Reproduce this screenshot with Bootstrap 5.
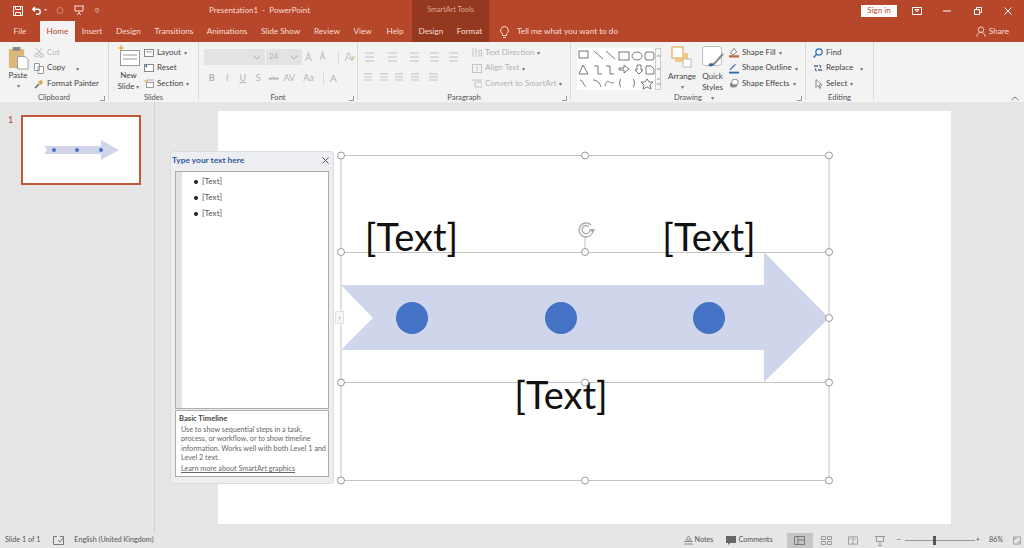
<!DOCTYPE html>
<html lang="en">
<head>
  <meta charset="UTF-8">
  <title>Presentation1 - PowerPoint</title>
  <link href="https://cdn.jsdelivr.net/npm/bootstrap@5.3.0/dist/css/bootstrap.min.css" rel="stylesheet" />
  <style>
    html, body { height: 548px; overflow: hidden; }
    body { font-family: Lato, "Open Sans", sans-serif; font-size: 8px; color: #444; background: #e6e6e6; line-height: 1.2; }
    svg { display: block; flex: none; }

    /* title bar */
    .title-bar { height: 21px; background: #b7472a; color: #f6ddd5; }
    .qat { width: 110px; padding-left: 13px; gap: 9px; }
    .title-text { width: 302px; font-size: 8px; padding-left: 99px; white-space: nowrap; }
    .tools-head { width: 77px; height: 21px; background: #94391f; font-size: 7.2px; color: #dca795; }
    .signin { background: #fff; color: #b7472a; width: 36px; height: 12px; font-size: 8px; margin-right: 15px; }
    .win-gap-a { margin-right: 21px; }
    .win-gap-b { margin-right: 23px; }
    .win-gap-c { margin-right: 22px; }
    .win-gap-d { margin-right: 12px; }

    /* tabs */
    .tab-bar { height: 21px; background: #b7472a; color: #f6ddd5; font-size: 8.2px; }
    .rb-tab { height: 21px; white-space: nowrap; }
    .rb-tab.on { background: #f3f3f3; color: #b7472a; }
    .rb-tab.ctx { background: #94391f; }
    .tw-31 { width: 31px; } .tw-34 { width: 34px; } .tw-35 { width: 35px; } .tw-38 { width: 38px; }
    .tw-39 { width: 39px; } .tw-40 { width: 40px; } .tw-52 { width: 52px; } .tw-53 { width: 53px; } .tw-54 { width: 54px; }
    .tell { margin-left: 11px; }
    .share-btn { margin-right: 15px; gap: 3px; }

    /* ribbon */
    .ribbon { height: 60px; background: #f3f3f3; }
    .rb-group { height: 58px; border-right: 1px solid #d8d8d8; position: relative; padding-top: 2px; }
    .grp-label { position: absolute; left: 0; right: 0; bottom: -2px; text-align: center; font-size: 7.6px; color: #555; }
    .launcher { position: absolute; right: 3px; bottom: -1px; width: 5px; height: 5px; border-left: 1px solid #999; border-bottom: 1px solid #999; transform: scaleX(-1); }
    .rb-col { display: flex; flex-direction: column; padding-top: 1px; }
    .rb-row { height: 15.5px; display: flex; align-items: center; gap: 3px; white-space: nowrap; }
    .big-btn { text-align: center; line-height: 10.5px; }
    .off { color: #b4b4b4; }
    .caret-mark { font-size: 6px; color: #777; }
    .combo { height: 16px; background: #e3e3e3; }
    .collapse-arrow { position: absolute; right: 5px; bottom: 1px; }

    .grp-clip { width: 109px; }
    .grp-slides { width: 90px; }
    .grp-font { width: 159px; padding: 7px 0 0 5px; }
    .grp-para { width: 213px; padding-left: 6px; }
    .grp-draw { width: 235px; padding-left: 6px; }
    .grp-edit { width: 68px; padding-left: 7px; padding-top: 3px; }

    .btn-paste { width: 34px; padding: 2px 0 0 2px; }
    .btn-new { width: 35px; padding-left: 4px; }
    .big-gap-1 { margin-top: 3px; }
    .big-gap-2 { margin-top: 3px; }
    .btn-arrange { width: 36px; margin-left: 3px; padding-top: 2px; }
    .btn-quick { width: 25px; padding-top: 2px; }
    .rb-col.col-para { width: 108px; padding-top: 6px; }

    .combo-font { width: 61px; margin-right: 1px; }
    .combo-size { width: 36px; padding-left: 3px; }
    .grow-a { width: 11px; margin-left: 1px; font-size: 10px; text-align: center; }
    .grow-b { width: 11px; margin-left: 3px; font-size: 9px; text-align: center; }
    .fmt-sep { width: 1px; height: 13px; background: #dcdcdc; }
    .sep-a { margin: 0 5px 0 10px; }
    .sep-b { margin: 0 6px 0 3px; }
    .font-row2 { height: 16px; margin-top: 5px; font-size: 9px; }
    .fcell { width: 15.5px; text-align: center; }
    .fcell-aa { width: 23px; text-align: center; }
    .fcell-abc { font-size: 6.5px; }
    .fcell-a { font-size: 10px; }

    /* work area */
    .work-area { height: 431px; position: relative; }
    .thumb-pane { width: 155px; height: 431px; border-right: 1px solid #d2d2d2; padding: 13px 0 0 8px; }
    .thumb-num { width: 13px; color: #b7472a; font-size: 9px; }
    .thumb-box { width: 120px; height: 70px; background: #fff; border: 2px solid #c0583b; }
    .canvas-svg { position: absolute; left: 0; top: 0; }
    .slide-text { font-family: Lato, sans-serif; font-size: 38px; fill: #111; text-anchor: middle; }

    /* smartart pane */
    .text-pane { position: absolute; left: 170px; top: 49px; width: 164px; height: 333px; background: #eceef1; border: 1px solid #dcdcdc; border-radius: 3px; padding: 0 4px 6px 4px; }
    .pane-head { height: 19px; padding-bottom: 2px; color: #2b579a; font-weight: 700; font-size: 8.4px; margin-left: -3px; }
    .pane-list { height: 238px; background: #fff; border: 1px solid #ababab; padding: 0; }
    .pane-rail { width: 6px; background: #e3e3e3; height: 100%; }
    .pane-list-body { padding-top: 2px; }
    .pane-item { height: 16px; font-size: 8.2px; gap: 4px; padding-left: 12px; color: #555; }
    .dot-mark { width: 4px; height: 4px; border-radius: 50%; background: #222; }
    .pane-info { height: 67px; background: #fff; border: 1px solid #ababab; margin-top: 1px; padding: 3px 3px 2px; font-size: 7.2px; line-height: 9.2px; color: #666; }
    .pane-info b { display: block; color: #444; font-weight: 700; margin-bottom: 2px; font-size: 7.6px; }
    .pane-info p { margin: 0 -3px 2px 2px; }
    .pane-info a { color: #666; margin-left: 2px; }
    .pane-tab { position: absolute; left: 335px; top: 209px; width: 9px; height: 13px; background: #f5f5f5; border: 1px solid #e2e2e2; font-size: 7px; color: #777; }

    /* status bar */
    .status-bar { height: 15px; background: #e6e6e6; font-size: 7.2px; color: #555; position: absolute; left: 0; right: 0; top: 533px; }
    .st-left { margin-left: 5px; }
    .st-check { margin-left: 13px; }
    .st-lang { margin-left: 10px; }
    .st-icon { margin-right: 2px; }
    .st-notes { margin-right: 13px; }
    .st-comments { margin-right: 14px; }
    .view-on { background: #c6c6c6; width: 26px; height: 15px; }
    .v-sorter { margin: 0 8px; }
    .v-reader { margin: 0 17px 0 8px; }
    .v-show { margin-right: 12px; }
    .zoom-track { width: 70px; height: 1px; background: #999; position: relative; margin: 0 1px 0 4px; }
    .zoom-thumb { position: absolute; left: 28px; top: -4px; width: 3px; height: 9px; background: #555; }
    .st-zoom { margin-left: 9px; }
    .st-fit { margin: 0 3px 0 10px; }
  </style>
</head>
<body>

<!-- Title bar -->
<div class="title-bar d-flex align-items-center">
  <div class="qat d-flex align-items-center">
    <svg width="10" height="10" viewBox="0 0 10 10"><path d="M.5.5h9v9h-9zM2.500.5v3h5v-3M2.500 9.500v-3h5v3" fill="none" stroke="#fff"/></svg>
    <svg width="15" height="10" viewBox="0 0 15 10"><path d="M3 1L.8 3.300 3 5.600M1 3.300h5c3 0 3 5 0 5H4" fill="none" stroke="#fff" stroke-width="1.400"/><path d="M12 3h3l-1.500 2z" fill="#f6ddd5"/></svg>
    <svg width="8" height="9" viewBox="0 0 8 9"><circle cx="4" cy="4.500" r="3" fill="none" stroke="#d38a72"/></svg>
    <svg width="12" height="11" viewBox="0 0 12 11"><path d="M1 1h10M2 1v5h8V1M6 6v2M4 10l2-2 2 2" fill="none" stroke="#f6ddd5"/></svg>
    <svg width="6" height="5" viewBox="0 0 6 5"><path d="M1 1h4M1 2.500l2 2 2-2" fill="none" stroke="#f6ddd5" stroke-width=".8"/></svg>
  </div>
  <div class="title-text">Presentation1 &nbsp;-&nbsp; PowerPoint</div>
  <div class="tools-head d-flex align-items-center justify-content-center">SmartArt Tools</div>
  <div class="ms-auto d-flex align-items-center">
    <div class="signin d-flex align-items-center justify-content-center">Sign in</div>
    <svg class="win-gap-a" width="10" height="8" viewBox="0 0 10 8"><path d="M.5.5h9v7h-9zM3 2.500h4L5 5z" fill="none" stroke="#fff"/></svg>
    <svg class="win-gap-b" width="8" height="8" viewBox="0 0 8 8"><path d="M0 4h8" stroke="#fff"/></svg>
    <svg class="win-gap-c" width="8" height="8" viewBox="0 0 8 8"><path d="M.5 2.500h5v5h-5zM2.500 2.500v-2h5v5h-2" fill="none" stroke="#fff"/></svg>
    <svg class="win-gap-d" width="8" height="8" viewBox="0 0 8 8"><path d="M.5.5l7 7M7.500.5l-7 7" stroke="#fff"/></svg>
  </div>
</div>

<!-- Tabs -->
<div class="tab-bar d-flex align-items-center">
  <div class="rb-tab tw-40 d-flex align-items-center justify-content-center">File</div>
  <div class="rb-tab on tw-35 d-flex align-items-center justify-content-center">Home</div>
  <div class="rb-tab tw-34 d-flex align-items-center justify-content-center">Insert</div>
  <div class="rb-tab tw-39 d-flex align-items-center justify-content-center">Design</div>
  <div class="rb-tab tw-52 d-flex align-items-center justify-content-center">Transitions</div>
  <div class="rb-tab tw-54 d-flex align-items-center justify-content-center">Animations</div>
  <div class="rb-tab tw-53 d-flex align-items-center justify-content-center">Slide Show</div>
  <div class="rb-tab tw-40 d-flex align-items-center justify-content-center">Review</div>
  <div class="rb-tab tw-31 d-flex align-items-center justify-content-center">View</div>
  <div class="rb-tab tw-34 d-flex align-items-center justify-content-center">Help</div>
  <div class="rb-tab ctx tw-38 d-flex align-items-center justify-content-center">Design</div>
  <div class="rb-tab ctx tw-39 d-flex align-items-center justify-content-center">Format</div>
  <div class="tell d-flex align-items-center gap-2">
    <svg width="9" height="12" viewBox="0 0 9 12"><path d="M4.500.5a4 4 0 0 0-2 7.400V9.500h4V7.900a4 4 0 0 0-2-7.400zM3 11.500h3" fill="none" stroke="#f6ddd5"/></svg>
    Tell me what you want to do
  </div>
  <div class="share-btn ms-auto d-flex align-items-center">
    <svg width="10" height="11" viewBox="0 0 11 11"><circle cx="5.500" cy="3.500" r="3" fill="none" stroke="#f6ddd5"/><path d="M1 11c0-6 9-6 9 0" fill="none" stroke="#f6ddd5"/></svg>
    Share
  </div>
</div>

<!-- Ribbon -->
<div class="ribbon d-flex">
  <!-- Clipboard -->
  <div class="rb-group grp-clip d-flex">
    <div class="big-btn btn-paste">
      <svg class="mx-auto" width="22" height="24" viewBox="0 0 23 25"><rect x="2" y="3" width="16" height="20" rx="1" fill="#dcb97a"/><rect x="6" y="1" width="8" height="4" fill="#8a8a8a"/><path d="M11 11h8l3 3v10H11z" fill="#fff" stroke="#999"/></svg>
      <div>Paste</div>
      <div class="caret-mark">&#9662;</div>
    </div>
    <div class="rb-col">
      <div class="rb-row off"><svg width="10" height="11" viewBox="0 0 10 11"><path d="M2 1l5 6M8 1L3 7" stroke="#bbb" fill="none"/><circle cx="2.500" cy="8.500" r="1.800" fill="none" stroke="#bbb"/><circle cx="7.500" cy="8.500" r="1.800" fill="none" stroke="#bbb"/></svg>Cut</div>
      <div class="rb-row"><svg width="10" height="11" viewBox="0 0 10 11"><path d="M.5.500h5v7h-5zM4 3.500h5.500v7H4z" fill="#fff" stroke="#999"/></svg>Copy <span class="caret-mark ms-2">&#9662;</span></div>
      <div class="rb-row"><svg width="10" height="10" viewBox="0 0 10 10"><path d="M1 9l4-4" stroke="#666" stroke-width="1.600"/><path d="M4 3l3-2 2 2-2 3z" fill="#d9a441"/></svg>Format Painter</div>
    </div>
    <div class="grp-label">Clipboard</div><div class="launcher"></div>
  </div>
  <!-- Slides -->
  <div class="rb-group grp-slides d-flex">
    <div class="big-btn btn-new">
      <svg class="mx-auto" width="22" height="23" viewBox="0 0 22 23"><rect x="2.500" y="6.500" width="19" height="15" fill="#fff" stroke="#999"/><path d="M5 11h14M5 15h14" stroke="#ccc" stroke-width="2"/><path d="M3 0l1 3 3 1-3 1-1 3-1-3-3-1 3-1z" fill="#e8b54a"/></svg>
      <div class="big-gap-2">New</div>
      <div>Slide <span class="caret-mark">&#9662;</span></div>
    </div>
    <div class="rb-col">
      <div class="rb-row"><svg width="10" height="10" viewBox="0 0 10 10"><rect x=".5" y="1.500" width="9" height="7" fill="#fff" stroke="#888"/><rect x="2" y="3" width="6" height="1.500" fill="#bbb"/></svg>Layout <span class="caret-mark">&#9662;</span></div>
      <div class="rb-row"><svg width="10" height="10" viewBox="0 0 10 10"><rect x=".5" y="1.500" width="9" height="7" fill="#fff" stroke="#888"/><path d="M1 3l2-2v4z" fill="#2b6cb0"/></svg>Reset</div>
      <div class="rb-row"><svg width="10" height="10" viewBox="0 0 10 10"><path d="M0 2h4" stroke="#d9a441"/><rect x="2.500" y="3.500" width="7" height="5" fill="#fff" stroke="#999"/><path d="M3 1h7" stroke="#aaa"/></svg>Section <span class="caret-mark">&#9662;</span></div>
    </div>
    <div class="grp-label">Slides</div>
  </div>
  <!-- Font -->
  <div class="rb-group grp-font">
    <div class="d-flex align-items-center off">
      <div class="combo combo-font d-flex align-items-center justify-content-end"><svg class="me-1" width="8" height="5" viewBox="0 0 8 5"><path d="M.5.500l3.500 3.500 3.500-3.500" fill="none" stroke="#aaa"/></svg></div>
      <div class="combo combo-size d-flex align-items-center">24<svg class="ms-auto me-1" width="8" height="5" viewBox="0 0 8 5"><path d="M.5.500l3.500 3.500 3.500-3.500" fill="none" stroke="#aaa"/></svg></div>
      <div class="grow-a">A&#770;</div>
      <div class="grow-b">A&#770;</div>
      <div class="fmt-sep sep-a"></div>
      <svg width="11" height="10" viewBox="0 0 11 10"><path d="M1 9l3-8h1l3 8M3 6h4" fill="none" stroke="#c2c2c2"/><path d="M6 8l3-4 2 1-3 4z" fill="#d9c9a4"/></svg>
    </div>
    <div class="font-row2 d-flex align-items-center off">
      <b class="fcell">B</b><i class="fcell">I</i><u class="fcell">U</u><span class="fcell">S</span><span class="fcell fcell-abc"><s>abc</s></span><span class="fcell">AV</span><span class="fcell-aa">Aa</span>
      <div class="fmt-sep sep-b"></div>
      <span class="fcell-a">A</span>
    </div>
    <div class="grp-label">Font</div><div class="launcher"></div>
  </div>
  <!-- Paragraph -->
  <div class="rb-group grp-para d-flex">
    <div class="rb-col col-para">
      <svg width="102" height="14" viewBox="0 0 102 14"><g stroke="#c2c2c2" fill="none"><path d="M1 3h9M1 7h9M1 11h9M24 3h9M24 7h9M24 11h9M46 3h9M46 7h9M46 11h9M66 3h9M66 7h9M66 11h9M85 3h9M85 7h9M85 11h9"/></g></svg>
      <svg class="mt-2" width="88" height="10" viewBox="0 0 88 10"><g stroke="#c2c2c2" fill="none"><path d="M0 2h8M0 5h8M0 8h8M16 2h8M16 5h8M16 8h8M31 2h8M31 5h8M31 8h8M47 2h8M47 5h8M47 8h8M65 2h9M65 5h9M65 8h9"/></g></svg>
    </div>
    <div class="rb-col off">
      <div class="rb-row"><svg width="10" height="11" viewBox="0 0 10 11"><path d="M1 1v9M4 1v9M7 3h2.500v6H7z" fill="none" stroke="#c2c2c2"/></svg>Text Direction <span class="caret-mark">&#9662;</span></div>
      <div class="rb-row"><svg width="10" height="11" viewBox="0 0 10 11"><rect x=".5" y="1.500" width="9" height="8" fill="none" stroke="#c2c2c2"/><path d="M5 3v5" stroke="#c2c2c2"/></svg>Align Text <span class="caret-mark">&#9662;</span></div>
      <div class="rb-row"><svg width="10" height="11" viewBox="0 0 10 11"><path d="M0 2h10M3 4h7v5H3z" fill="none" stroke="#c2c2c2"/></svg>Convert to SmartArt <span class="caret-mark">&#9662;</span></div>
    </div>
    <div class="grp-label">Paragraph</div><div class="launcher"></div>
  </div>
  <!-- Drawing -->
  <div class="rb-group grp-draw d-flex">
    <svg class="mt-1" width="84" height="42" viewBox="0 0 84 42">
      <rect width="78" height="42" fill="#fff"/>
      <rect x="78.500" y=".5" width="5" height="41" fill="#f7f7f7" stroke="#ccc"/>
      <g fill="none" stroke="#555" stroke-width=".8">
        <rect x="2" y="3" width="9" height="7"/><path d="M17 3l9 8M29 3l9 8"/><rect x="42" y="4" width="10" height="8"/><ellipse cx="60" cy="8" rx="5" ry="4"/><rect x="68" y="4" width="9" height="8" rx="2"/>
        <path d="M6 17l5 9H2zM17 18h4v8h4M29 18h4v8h4M42 20h5v-3l5 4-5 4v-3h-5zM60 17v5h-2l4 4 4-4h-2v-5zM69 18h5l3 3v5h-8z"/>
        <path d="M3 32c3 0 4 6 6 7M16 32c4 0 7 3 8 7M28 38c3-10 5 0 9-4M44 31c-2 0 0 4-2 4 2 0 0 4 2 4M56 31c2 0 0 4 2 4-2 0 0 4-2 4M70 31l2 3 4 0-3 3 1 4-4-2-4 2 1-4-3-3 4 0z"/>
      </g>
      <path d="M80 9l1.500-2 1.500 2M80 20l1.500 2 1.500-2M80 31h3M80 35l1.500 2 1.500-2" fill="none" stroke="#666" stroke-width=".6"/>
    </svg>
    <div class="big-btn btn-arrange">
      <svg class="mx-auto" width="22" height="22" viewBox="0 0 22 22"><rect x="1" y="1" width="11" height="11" fill="#fff" stroke="#d9a441"/><path d="M4 11h8V7h5v9H4z" fill="#edc987"/><rect x="12" y="13" width="8" height="8" fill="#fff" stroke="#bbb"/></svg>
      <div class="big-gap-1">Arrange</div>
      <div class="caret-mark">&#9662;</div>
    </div>
    <div class="big-btn btn-quick">
      <svg class="mx-auto" width="22" height="22" viewBox="0 0 22 22"><rect x=".5" y=".5" width="19" height="19" rx="3" fill="#fff" stroke="#bbb"/><path d="M21 8l-9 10-4 2" fill="none" stroke="#888" stroke-width="2"/><path d="M8 17l4 1-2 2-4 0z" fill="#2b6cb0"/></svg>
      <div class="big-gap-1">Quick</div>
      <div>Styles <span class="caret-mark">&#9662;</span></div>
    </div>
    <div class="rb-col ms-1">
      <div class="rb-row"><svg width="10" height="11" viewBox="0 0 11 11"><path d="M5.500 1L1.500 6l3 2 4-3z" fill="#fff" stroke="#777"/><rect y="8.500" width="11" height="2.500" fill="#c9663f"/></svg>Shape Fill <span class="caret-mark">&#9662;</span></div>
      <div class="rb-row"><svg width="10" height="11" viewBox="0 0 11 11"><path d="M1 7l6-6" stroke="#2b6cb0" stroke-width="1.400"/><rect y="9" width="11" height="2" fill="#2b6cb0"/></svg>Shape Outline <span class="caret-mark">&#9662;</span></div>
      <div class="rb-row"><svg width="10" height="11" viewBox="0 0 11 11"><rect x="1" y="4" width="8" height="6" rx="3" fill="#888"/><rect x="3" y="1" width="7" height="6" rx="2.500" fill="#fff" stroke="#888"/></svg>Shape Effects <span class="caret-mark">&#9662;</span></div>
    </div>
    <div class="grp-label">Drawing</div><div class="launcher"></div>
  </div>
  <!-- Editing -->
  <div class="rb-group grp-edit">
    <div class="rb-row"><svg width="10" height="10" viewBox="0 0 10 10"><circle cx="6" cy="4" r="3.200" fill="none" stroke="#2b6cb0" stroke-width="1.200"/><path d="M3.500 6.500L.5 9.500" stroke="#2b6cb0" stroke-width="1.400"/></svg>Find</div>
    <div class="rb-row"><svg width="10" height="10" viewBox="0 0 10 10"><path d="M1 3h4M5 7h4" stroke="#666" stroke-width="1.500"/><path d="M6 2l2 1-1 2M4 8L2 7l1-2" fill="none" stroke="#2b6cb0"/></svg>Replace <span class="caret-mark ms-1">&#9662;</span></div>
    <div class="rb-row"><svg width="10" height="10" viewBox="0 0 10 10"><path d="M3 .5v8l2-2 2 3 1-.5-2-3h3z" fill="#fff" stroke="#888"/></svg>Select <span class="caret-mark">&#9662;</span></div>
    <div class="grp-label">Editing</div>
  </div>
  <div class="flex-grow-1 position-relative">
    <svg class="collapse-arrow" width="8" height="5" viewBox="0 0 8 5"><path d="M.5 4L4 1l3.500 3" fill="none" stroke="#777"/></svg>
  </div>
</div>

<!-- Work area -->
<div class="work-area d-flex">
  <div class="thumb-pane d-flex">
    <div class="thumb-num">1</div>
    <div class="thumb-box d-flex align-items-center justify-content-center">
      <svg width="76" height="20" viewBox="-1 0 76 20"><path d="M0 6h57V0l18 10-18 10v-6H0l3-4z" fill="#d0d5e9"/><circle cx="10" cy="10" r="2" fill="#4472c4"/><circle cx="33" cy="10" r="2" fill="#4472c4"/><circle cx="57" cy="10" r="2" fill="#4472c4"/></svg>
    </div>
  </div>

  <!-- Slide canvas -->
  <svg class="canvas-svg" width="1024" height="431" viewBox="0 102 1024 431">
    <rect x="218" y="111" width="733" height="413" fill="#fff"/>
    <path d="M341 285h423v-33l65 66-65 64v-32H341l32-32z" fill="#cfd5ea"/>
    <circle cx="412" cy="318" r="16" fill="#4472c4"/>
    <circle cx="561" cy="318" r="16" fill="#4472c4"/>
    <circle cx="709" cy="318" r="16" fill="#4472c4"/>
    <g fill="none" stroke="#c4c4c4">
      <rect x="341" y="155.500" width="488" height="325"/>
      <path d="M341 252.500h488M341 382.500h488M585 238v14"/>
    </g>
    <text class="slide-text" x="411.500" y="251">[Text]</text>
    <text class="slide-text" x="709" y="251">[Text]</text>
    <text class="slide-text" x="561" y="409">[Text]</text>
    <g fill="#fff" stroke="#999">
      <circle cx="341" cy="155.500" r="3.500"/><circle cx="585" cy="155.500" r="3.500"/><circle cx="829" cy="155.500" r="3.500"/>
      <circle cx="341" cy="252" r="3.500"/><circle cx="585" cy="252" r="3.500"/><circle cx="829" cy="252" r="3.500"/>
      <circle cx="829" cy="318" r="3.500"/>
      <circle cx="341" cy="382.500" r="3.500"/><circle cx="585" cy="382.500" r="3.500"/><circle cx="829" cy="382.500" r="3.500"/>
      <circle cx="341" cy="480.500" r="3.500"/><circle cx="585" cy="480.500" r="3.500"/><circle cx="829" cy="480.500" r="3.500"/>
    </g>
    <path d="M591 225a7 7 0 1 0 2 6M589 227a4 4 0 1 0 1 3" fill="none" stroke="#a8a8a8" stroke-width="1.300"/>
    <path d="M589 229l6 0-2 4z" fill="#a8a8a8"/>
  </svg>

  <!-- SmartArt text pane -->
  <div class="text-pane">
    <div class="pane-head d-flex align-items-center justify-content-between">
      <span>Type your text here</span>
      <svg width="7" height="7" viewBox="0 0 7 7"><path d="M.5.500l6 6M6.500.500l-6 6" stroke="#555"/></svg>
    </div>
    <div class="pane-list d-flex">
      <div class="pane-rail"></div>
      <div class="pane-list-body flex-grow-1">
        <div class="pane-item d-flex align-items-center"><span class="dot-mark"></span>[Text]</div>
        <div class="pane-item d-flex align-items-center"><span class="dot-mark"></span>[Text]</div>
        <div class="pane-item d-flex align-items-center"><span class="dot-mark"></span>[Text]</div>
      </div>
    </div>
    <div class="pane-info">
      <b>Basic Timeline</b>
      <p>Use to show sequential steps in a task, process, or workflow, or to show timeline information. Works well with both Level 1 and Level 2 text.</p>
      <a href="#">Learn more about SmartArt graphics</a>
    </div>
  </div>
  <div class="pane-tab d-flex align-items-center justify-content-center">&#8250;</div>
</div>

<!-- Status bar -->
<div class="status-bar d-flex align-items-center">
  <span class="st-left">Slide 1 of 1</span>
  <svg class="st-check" width="11" height="9" viewBox="0 0 11 9"><path d="M4 .5H.5v8h10v-8H7M5 4l2 2 3-4" fill="none" stroke="#777"/></svg>
  <span class="st-lang">English (United Kingdom)</span>
  <div class="ms-auto d-flex align-items-center">
    <svg class="st-icon" width="9" height="9" viewBox="0 0 9 9"><path d="M4.500 0L2 4h5zM0 5.500h9M0 8h9" fill="none" stroke="#888"/></svg>
    <span class="st-notes">Notes</span>
    <svg class="st-icon" width="10" height="9" viewBox="0 0 10 9"><path d="M0 0h10v7H4L2 9V7H0z" fill="#666"/></svg>
    <span class="st-comments">Comments</span>
    <div class="view-on d-flex align-items-center justify-content-center"><svg width="11" height="9" viewBox="0 0 11 9"><path d="M.5.500h10v8H.5zM4 .500v8M4 4h6.500" fill="none" stroke="#777"/></svg></div>
    <svg class="v-sorter" width="11" height="9" viewBox="0 0 11 9"><path d="M.5.500h4v3h-4zM6.500.500h4v3h-4zM.5 5.500h4v3h-4zM6.500 5.500h4v3h-4z" fill="none" stroke="#999"/></svg>
    <svg class="v-reader" width="10" height="9" viewBox="0 0 11 9"><path d="M.5.500h10v8H.5zM5.500.500v8M2 3h2M7 3h2" fill="none" stroke="#999"/></svg>
    <svg class="v-show" width="10" height="10" viewBox="0 0 10 10"><path d="M0 .5h10M1.500.500v5h7v-5M5 5.500V9M3 9.500h4" fill="none" stroke="#999"/></svg>
    <span>&minus;</span>
    <div class="zoom-track"><div class="zoom-thumb"></div></div>
    <span>+</span>
    <span class="st-zoom">86%</span>
    <svg class="st-fit" width="8" height="9" viewBox="0 0 9 9"><path d="M.5.500h8v8h-8zM2 4V2h2M7 5v2H5" fill="none" stroke="#999"/></svg>
  </div>
</div>

<script src="https://cdn.jsdelivr.net/npm/bootstrap@5.3.0/dist/js/bootstrap.bundle.min.js"></script>
</body>
</html>
